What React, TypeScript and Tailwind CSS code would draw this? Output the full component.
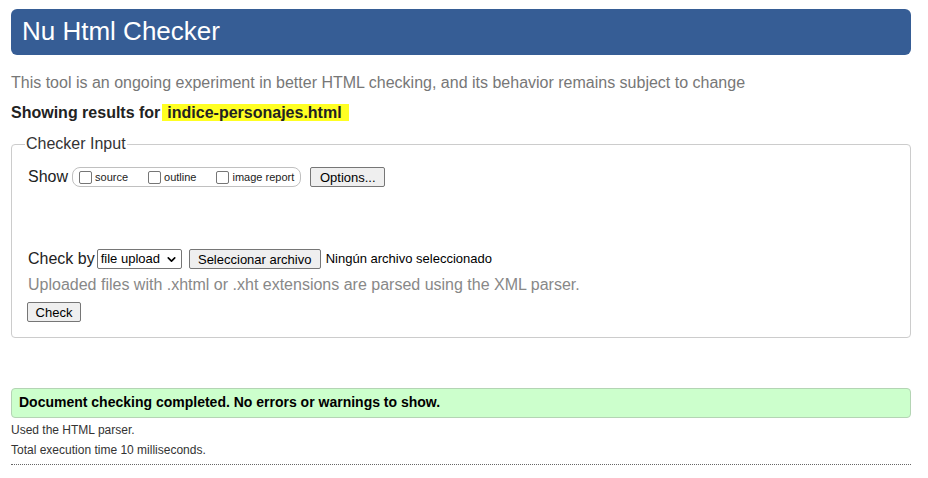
import { ChevronDown } from 'lucide-react';

function CheckBox({ label }: { label: string }) {
  return (
    <span className="flex items-center whitespace-nowrap">
      <span className="w-[13px] h-[13px] border border-[#767676] rounded-[2px] bg-white ml-[6px] mr-[3px]" />
      <span className="text-[11px] text-[#222]">{label}</span>
    </span>
  );
}

function NativeButton({ children, className = '' }: { children: React.ReactNode; className?: string }) {
  return (
    <button
      type="button"
      className={`h-[20px] px-[6px] border border-[#767676] rounded-[2px] bg-[#efefef] text-[13px] text-black leading-none whitespace-nowrap ${className}`}
    >
      {children}
    </button>
  );
}

export default function App() {
  return (
    <div className="w-[928px] h-[478px] bg-white pl-[11px] pr-[17px] pt-[9px] font-['Liberation_Sans',Arial,sans-serif] text-[#222]">
      <h1 className="h-[46px] bg-[#365d95] rounded-[6px] px-[11px] flex items-center text-white text-[26px] pb-[1px]">
        Nu Html Checker
      </h1>

      <p className="mt-[19px] text-[16px] leading-[18px] text-[#777]">
        This tool is an ongoing experiment in better HTML checking, and its behavior remains subject to change
      </p>

      <p className="mt-[12px] text-[16px] leading-[18px] font-bold text-[#222]">
        Showing results for
        <span className="ml-[2px] pl-[5px] pr-[7px] bg-[#ffff22]">indice-personajes.html</span>
      </p>

      <fieldset className="mt-[13px] border border-[#cccccc] rounded-[4px] pl-[13px] pr-[12px] pb-[13px]">
        <legend className="px-[1px] text-[16px] leading-[18px] text-[#333]">Checker Input</legend>

        <div className="mt-[14px] ml-[2px] flex items-center h-[20px]">
          <span className="text-[16px] text-[#222] ml-[1px]">Show</span>
          <div className="ml-[4px] h-[20px] flex items-center border border-[#c0c0c0] rounded-[8px] pr-[6px] gap-[14px]">
            <CheckBox label="source" />
            <CheckBox label="outline" />
            <CheckBox label="image report" />
          </div>
          <NativeButton className="ml-[9px] w-[75px]">Options...</NativeButton>
        </div>

        <div className="mt-[62px] ml-[2px] flex items-center h-[20px]">
          <span className="text-[16px] text-[#222] ml-[1px]">Check by</span>
          <span className="ml-[2px] h-[20px] w-[85px] border border-[#767676] rounded-[2px] bg-white flex items-center pl-[3px] pr-[3px] text-[13px] text-black">
            file upload
            <ChevronDown className="ml-auto w-[13px] h-[13px]" strokeWidth={3} />
          </span>
          <NativeButton className="ml-[7px] w-[132px]">Seleccionar archivo</NativeButton>
          <span className="ml-[5px] text-[13px] text-black">Ningún archivo seleccionado</span>
        </div>

        <p className="mt-[7px] ml-[3px] text-[16px] leading-[18px] text-[#888]">
          Uploaded files with .xhtml or .xht extensions are parsed using the XML parser.
        </p>

        <NativeButton className="mt-[8px] ml-[2px] w-[54px]">Check</NativeButton>
      </fieldset>

      <div className="mt-[50px] h-[30px] bg-[#ccffcc] border border-[#b4d4b4] rounded-[4px] px-[7px] flex items-center text-[14px] font-bold text-black">
        Document checking completed. No errors or warnings to show.
      </div>

      <p className="mt-[2px] text-[12px] leading-[20px] text-[#333]">Used the HTML parser.</p>
      <p className="text-[12px] leading-[20px] text-[#333]">Total execution time 10 milliseconds.</p>
      <div className="mt-[4px] border-b border-dotted border-[#666]" />
    </div>
  );
}
